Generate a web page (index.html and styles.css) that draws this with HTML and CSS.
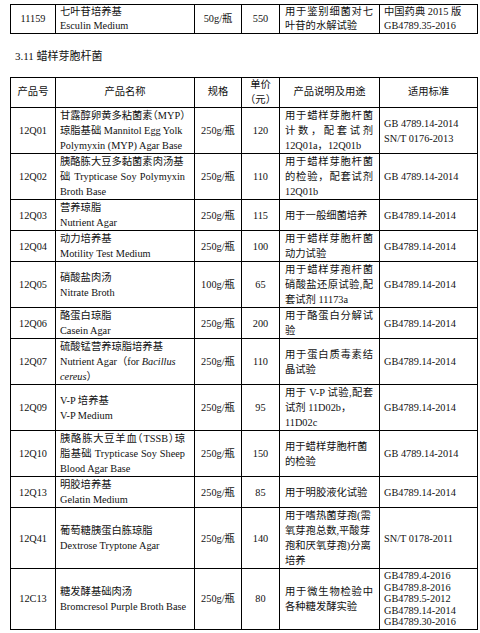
FILE: index.html
```html
<!DOCTYPE html>
<html lang="zh-CN">
<head>
<meta charset="utf-8">
<title>3.11 蜡样芽胞杆菌</title>
<link rel="stylesheet" href="styles.css">
</head>
<body>
<table class="tbl first">
  <colgroup>
    <col class="c1"><col class="c2"><col class="c3"><col class="c4"><col class="c5"><col class="c6">
  </colgroup>
  <tr>
    <td class="ctr">11159</td>
    <td class="name"><span class="ln">七叶苷培养基</span><span class="ln">Esculin Medium</span></td>
    <td class="ctr">50g/瓶</td>
    <td class="ctr">550</td>
    <td class="desc"><span class="ln j">用于鉴别细菌对七</span><span class="ln">叶苷的水解试验</span></td>
    <td class="std"><span class="ln">中国药典 2015 版</span><span class="ln">GB4789.35-2016</span></td>
  </tr>
</table>

<p class="heading">3.11 蜡样芽胞杆菌</p>

<table class="tbl">
  <colgroup>
    <col class="c1"><col class="c2"><col class="c3"><col class="c4"><col class="c5"><col class="c6">
  </colgroup>
  <tr class="head">
    <td class="ctr">产品号</td>
    <td class="ctr">产品名称</td>
    <td class="ctr">规格</td>
    <td class="ctr"><span class="ln">单价</span><span class="ln">（元）</span></td>
    <td class="ctr">产品说明及用途</td>
    <td class="ctr">适用标准</td>
  </tr>
  <tr>
    <td class="ctr">12Q01</td>
    <td class="name"><span class="ln j">甘露醇卵黄多粘菌素<span class="hp">（</span>MYP<span class="hp">）</span></span><span class="ln">琼脂基础 Mannitol Egg Yolk</span><span class="ln">Polymyxin (MYP) Agar Base</span></td>
    <td class="ctr">250g/瓶</td>
    <td class="ctr">120</td>
    <td class="desc"><span class="ln j">用于蜡样芽胞杆菌</span><span class="ln j">计数，配套试剂</span><span class="ln">12Q01a，12Q01b</span></td>
    <td class="std"><span class="ln">GB 4789.14-2014</span><span class="ln">SN/T 0176-2013</span></td>
  </tr>
  <tr>
    <td class="ctr">12Q02</td>
    <td class="name"><span class="ln">胰酪胨大豆多黏菌素肉汤基</span><span class="ln j">础 Trypticase Soy Polymyxin</span><span class="ln">Broth Base</span></td>
    <td class="ctr">250g/瓶</td>
    <td class="ctr">110</td>
    <td class="desc"><span class="ln j">用于蜡样芽胞杆菌</span><span class="ln j">的检验，配套试剂</span><span class="ln">12Q01b</span></td>
    <td class="std">GB 4789.14-2014</td>
  </tr>
  <tr>
    <td class="ctr">12Q03</td>
    <td class="name"><span class="ln">营养琼脂</span><span class="ln">Nutrient Agar</span></td>
    <td class="ctr">250g/瓶</td>
    <td class="ctr">115</td>
    <td class="desc">用于一般细菌培养</td>
    <td class="std">GB4789.14-2014</td>
  </tr>
  <tr>
    <td class="ctr">12Q04</td>
    <td class="name"><span class="ln">动力培养基</span><span class="ln">Motility Test Medium</span></td>
    <td class="ctr">250g/瓶</td>
    <td class="ctr">100</td>
    <td class="desc"><span class="ln j">用于蜡样芽胞杆菌</span><span class="ln">动力试验</span></td>
    <td class="std">GB4789.14-2014</td>
  </tr>
  <tr>
    <td class="ctr">12Q05</td>
    <td class="name"><span class="ln">硝酸盐肉汤</span><span class="ln">Nitrate Broth</span></td>
    <td class="ctr">100g/瓶</td>
    <td class="ctr">65</td>
    <td class="desc"><span class="ln j">用于蜡样芽孢杆菌</span><span class="ln j">硝酸盐还原试验,配</span><span class="ln">套试剂 11173a</span></td>
    <td class="std">GB4789.14-2014</td>
  </tr>
  <tr>
    <td class="ctr">12Q06</td>
    <td class="name"><span class="ln">酪蛋白琼脂</span><span class="ln">Casein Agar</span></td>
    <td class="ctr">250g/瓶</td>
    <td class="ctr">200</td>
    <td class="desc"><span class="ln j">用于酪蛋白分解试</span><span class="ln">验</span></td>
    <td class="std">GB4789.14-2014</td>
  </tr>
  <tr>
    <td class="ctr">12Q07</td>
    <td class="name"><span class="ln">硫酸锰营养琼脂培养基</span><span class="ln">Nutrient Agar（for <i>Bacillus</i></span><span class="ln"><i>cereus</i>）</span></td>
    <td class="ctr">250g/瓶</td>
    <td class="ctr">110</td>
    <td class="desc"><span class="ln j">用于蛋白质毒素结</span><span class="ln">晶试验</span></td>
    <td class="std">GB4789.14-2014</td>
  </tr>
  <tr>
    <td class="ctr">12Q09</td>
    <td class="name"><span class="ln">V-P 培养基</span><span class="ln">V-P Medium</span></td>
    <td class="ctr">250g/瓶</td>
    <td class="ctr">95</td>
    <td class="desc"><span class="ln j">用于 V-P 试验,配套</span><span class="ln">试剂 11D02b，</span><span class="ln">11D02c</span></td>
    <td class="std">GB4789.14-2014</td>
  </tr>
  <tr>
    <td class="ctr">12Q10</td>
    <td class="name"><span class="ln j">胰酪胨大豆羊血<span class="hp">（</span>TSSB<span class="hp">）</span>琼</span><span class="ln j">脂基础 Trypticase Soy Sheep</span><span class="ln">Blood Agar Base</span></td>
    <td class="ctr">250g/瓶</td>
    <td class="ctr">150</td>
    <td class="desc"><span class="ln">用于蜡样芽胞杆菌</span><span class="ln">的检验</span></td>
    <td class="std">GB 4789.14-2014</td>
  </tr>
  <tr>
    <td class="ctr">12Q13</td>
    <td class="name"><span class="ln">明胶培养基</span><span class="ln">Gelatin Medium</span></td>
    <td class="ctr">250g/瓶</td>
    <td class="ctr">85</td>
    <td class="desc">用于明胶液化试验</td>
    <td class="std">GB4789.14-2014</td>
  </tr>
  <tr>
    <td class="ctr">12Q41</td>
    <td class="name"><span class="ln">葡萄糖胰蛋白胨琼脂</span><span class="ln">Dextrose Tryptone Agar</span></td>
    <td class="ctr">250g/瓶</td>
    <td class="ctr">140</td>
    <td class="desc"><span class="ln">用于嗜热菌芽孢(需</span><span class="ln">氧芽孢总数,平酸芽</span><span class="ln">孢和厌氧芽孢)分离</span><span class="ln">培养</span></td>
    <td class="std">SN/T 0178-2011</td>
  </tr>
  <tr>
    <td class="ctr">12C13</td>
    <td class="name"><span class="ln">糖发酵基础肉汤</span><span class="ln">Bromcresol Purple Broth Base</span></td>
    <td class="ctr">250g/瓶</td>
    <td class="ctr">80</td>
    <td class="desc"><span class="ln j">用于微生物检验中</span><span class="ln">各种糖发酵实验</span></td>
    <td class="std stds"><span class="ln">GB4789.4-2016</span><span class="ln">GB4789.8-2016</span><span class="ln">GB4789.5-2012</span><span class="ln">GB4789.14-2014</span><span class="ln">GB4789.30-2016</span></td>
  </tr>
</table>
</body>
</html>
```

FILE: styles.css
```css
html, body {
  margin: 0;
  padding: 0;
  background: #fff;
}

body {
  font-family: "Liberation Serif", "Noto Sans CJK SC", serif;
  font-size: 10.3px;
  color: #111;
  line-height: 15px;
}

.tbl {
  border-collapse: collapse;
  table-layout: fixed;
  width: 467px;
  margin-left: 10px;
}

.first {
  margin-top: 4px;
  line-height: 14px;
}

.c1 { width: 45px; }
.c2 { width: 139px; }
.c3 { width: 47px; }
.c4 { width: 38px; }
.c5 { width: 100px; }
.c6 { width: 98px; }

.tbl td {
  border: 1px solid #000;
  padding: 0 4px;
  vertical-align: middle;
  white-space: nowrap;
}

.tbl .ctr {
  text-align: center;
  padding: 0;
}

.tbl .name {
  padding: 0 9px 0 4px;
}

.tbl .desc {
  padding: 0 6px 0 5px;
}

.tbl .std {
  padding: 0 4px;
}

.tbl .stds {
  line-height: 11.6px;
  padding: 1px 4px;
}

.head td {
  line-height: 14.5px;
}

.ln {
  display: block;
}

.j {
  text-align: justify;
  text-align-last: justify;
}

.hp {
  font-feature-settings: "halt";
}

.heading {
  margin: 14px 0 13px 15px;
  font-size: 11px;
  line-height: 16px;
}
```
